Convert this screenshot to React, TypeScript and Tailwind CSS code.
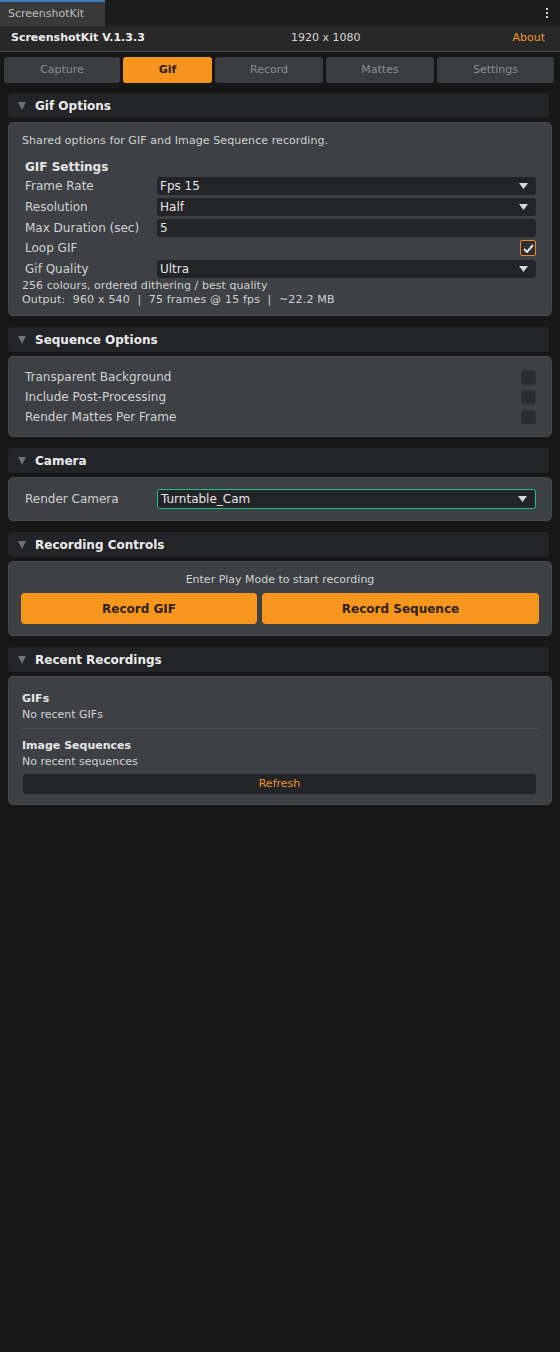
import React from "react";

const font = { fontFamily: '"DejaVu Sans", Verdana, sans-serif' };

const tabs = ["Capture", "Gif", "Record", "Mattes", "Settings"];

const Caret = () => (
  <svg width="9" height="6" viewBox="0 0 9 6" className="shrink-0">
    <path d="M0 0h9L4.5 6z" fill="#d8d8d8" />
  </svg>
);

const Section = ({ title, first, children }: { title: string; first?: boolean; children: React.ReactNode }) => (
  <div className={first ? "mt-[10px]" : "mt-[11px]"}>
    <div className="h-[25px] w-[541px] bg-[#232427] rounded-[3px] flex items-center pl-[10px] gap-[9px]">
      <svg width="8" height="8" viewBox="0 0 8 8">
        <path d="M0 0h8L4 8z" fill="#6f7175" />
      </svg>
      <span className="text-[12px] font-bold text-[#ececec]">{title}</span>
    </div>
    <div className="mt-[4px] w-[544px] bg-[#3d4145] rounded-[5px] border border-[#46494d]">
      {children}
    </div>
  </div>
);

const Dropdown = ({ value, green }: { value: string; green?: boolean }) => (
  <div
    className={`flex-1 rounded-[3px] bg-[#232427] flex items-center justify-between pl-[3px] pr-[8px] text-[12px] text-[#e6e6e6] ${
      green ? "border border-[#1fbf85] h-[20px]" : "h-[18px]"
    }`}
  >
    <span>{value}</span>
    <Caret />
  </div>
);

const Row = ({ label, h = 21, children }: { label: string; h?: number; children?: React.ReactNode }) => (
  <div className={`flex items-center ${h === 20 ? "h-[20px]" : "h-[21px]"}`}>
    <span className="w-[132px] shrink-0 whitespace-nowrap text-[12px] text-[#d2d2d2]">{label}</span>
    <div className="flex-1 flex justify-end">{children}</div>
  </div>
);

const EmptyBox = () => (
  <div className="w-[15px] h-[15px] rounded-[2px] bg-[#2b2d30] border border-[#34363a]" />
);

export default function App() {
  return (
    <div style={font} className="min-h-[1352px] w-[560px] bg-[#171717] text-[#d2d2d2]">
      {/* window tab strip */}
      <div className="h-[26px] bg-[#1c1c1c] flex items-stretch justify-between">
        <div className="w-[105px] bg-[#3a3a3a] border-t-2 border-[#3f7fbf] flex items-center pl-[8px] text-[11px] text-[#bdbdbd]">
          ScreenshotKit
        </div>
        <div className="flex flex-col items-center justify-center gap-[2px] pr-[12px]">
          <span className="w-[2px] h-[2px] bg-[#d0d0d0]" />
          <span className="w-[2px] h-[2px] bg-[#d0d0d0]" />
          <span className="w-[2px] h-[2px] bg-[#d0d0d0]" />
        </div>
      </div>

      {/* header */}
      <div className="h-[26px] bg-[#282828] border-b border-[#4a4a4a] flex items-center px-[11px] text-[11px]">
        <span className="font-bold text-[#eeeeee] w-[280px]">ScreenshotKit V.1.3.3</span>
        <span className="text-[#d6d6d6] flex-1">1920 x 1080</span>
        <span className="text-[#f0962a] mr-[4px]">About</span>
      </div>

      {/* tabs */}
      <div className="flex gap-[3px] px-[4px] mt-[5px]">
        {tabs.map((t, i) => (
          <div
            key={t}
            className={`h-[26px] rounded-[3px] flex items-center justify-center text-[11px] ${
              i === 0 ? "w-[116px]" : i === 1 ? "w-[89px]" : i === 4 ? "w-[117px]" : "w-[108px]"
            } ${i === 1 ? "bg-[#f7941d] text-[#2a1c08] font-bold" : "bg-[#393c40] text-[#8c8e91]"}`}
          >
            {t}
          </div>
        ))}
      </div>

      <div className="px-[8px]">
        <Section title="Gif Options" first>
          <div className="px-[13px] pt-[11px] pb-[8px]">
            <div className="text-[11px] text-[#d2d2d2] leading-[14px] tracking-[0.08px]">
              Shared options for GIF and Image Sequence recording.
            </div>
            <div className="pl-[3px] mt-[12px] pr-[2px]">
              <div className="text-[12px] font-bold text-[#e6e6e6] leading-[14px]">GIF Settings</div>
              <div className="mt-[1px]">
                <Row label="Frame Rate">
                  <Dropdown value="Fps 15" />
                </Row>
                <Row label="Resolution">
                  <Dropdown value="Half" />
                </Row>
                <Row label="Max Duration (sec)">
                  <div className="flex-1 h-[18px] rounded-[3px] bg-[#232427] flex items-center pl-[3px] text-[12px] text-[#e6e6e6]">
                    5
                  </div>
                </Row>
                <Row label="Loop GIF" h={20}>
                  <div className="w-[16px] h-[16px] rounded-[2px] bg-[#2b2d30] border border-[#e8892a] flex items-center justify-center">
                    <svg width="11" height="9" viewBox="0 0 11 9">
                      <path d="M1 5l3 3 6-7" stroke="#e4e4e4" strokeWidth="2" fill="none" />
                    </svg>
                  </div>
                </Row>
                <Row label="Gif Quality">
                  <Dropdown value="Ultra" />
                </Row>
              </div>
            </div>
            <div className="text-[11px] text-[#d2d2d2] leading-[14px] tracking-[0.06px]">
              256 colours, ordered dithering / best quality
            </div>
            <div className="text-[11px] text-[#d2d2d2] leading-[14px] whitespace-pre tracking-[0.2px]">
              {"Output:  960 x 540  |  75 frames @ 15 fps  |  ~22.2 MB"}
            </div>
          </div>
        </Section>

        <Section title="Sequence Options">
          <div className="pl-[16px] pr-[15px] pt-[10px] pb-[9px]">
            <Row label="Transparent Background" h={20}>
              <EmptyBox />
            </Row>
            <Row label="Include Post-Processing" h={20}>
              <EmptyBox />
            </Row>
            <Row label="Render Mattes Per Frame" h={20}>
              <EmptyBox />
            </Row>
          </div>
        </Section>

        <Section title="Camera">
          <div className="pl-[16px] pr-[15px] pt-[11px] pb-[11px]">
            <Row label="Render Camera" h={20}>
              <Dropdown value="Turntable_Cam" green />
            </Row>
          </div>
        </Section>

        <Section title="Recording Controls">
          <div className="px-[12px] pt-[11px] pb-[11px]">
            <div className="text-center text-[11px] text-[#d2d2d2] leading-[14px]">
              Enter Play Mode to start recording
            </div>
            <div className="flex gap-[5px] mt-[6px]">
              <button className="w-[236px] h-[31px] rounded-[4px] bg-[#f7961c] text-[#2e2210] font-bold text-[12px]">
                Record GIF
              </button>
              <button className="flex-1 h-[31px] rounded-[4px] bg-[#f7961c] text-[#2e2210] font-bold text-[12px]">
                Record Sequence
              </button>
            </div>
          </div>
        </Section>

        <Section title="Recent Recordings">
          <div className="px-[13px] pt-[14px] pb-[10px]">
            <div className="text-[11px] font-bold text-[#e6e6e6] leading-[16px]">GIFs</div>
            <div className="text-[11px] text-[#d2d2d2] leading-[16px]">No recent GIFs</div>
            <div className="h-px bg-[#4b4f53] mt-[5px] mb-[9px]" />
            <div className="text-[11px] font-bold text-[#e6e6e6] leading-[16px]">Image Sequences</div>
            <div className="text-[11px] text-[#d2d2d2] leading-[16px]">No recent sequences</div>
            <button className="mt-[2px] ml-[1px] w-[513px] h-[20px] rounded-[3px] bg-[#232427] text-[11px] text-[#e8902a]">
              Refresh
            </button>
          </div>
        </Section>
      </div>
    </div>
  );
}
